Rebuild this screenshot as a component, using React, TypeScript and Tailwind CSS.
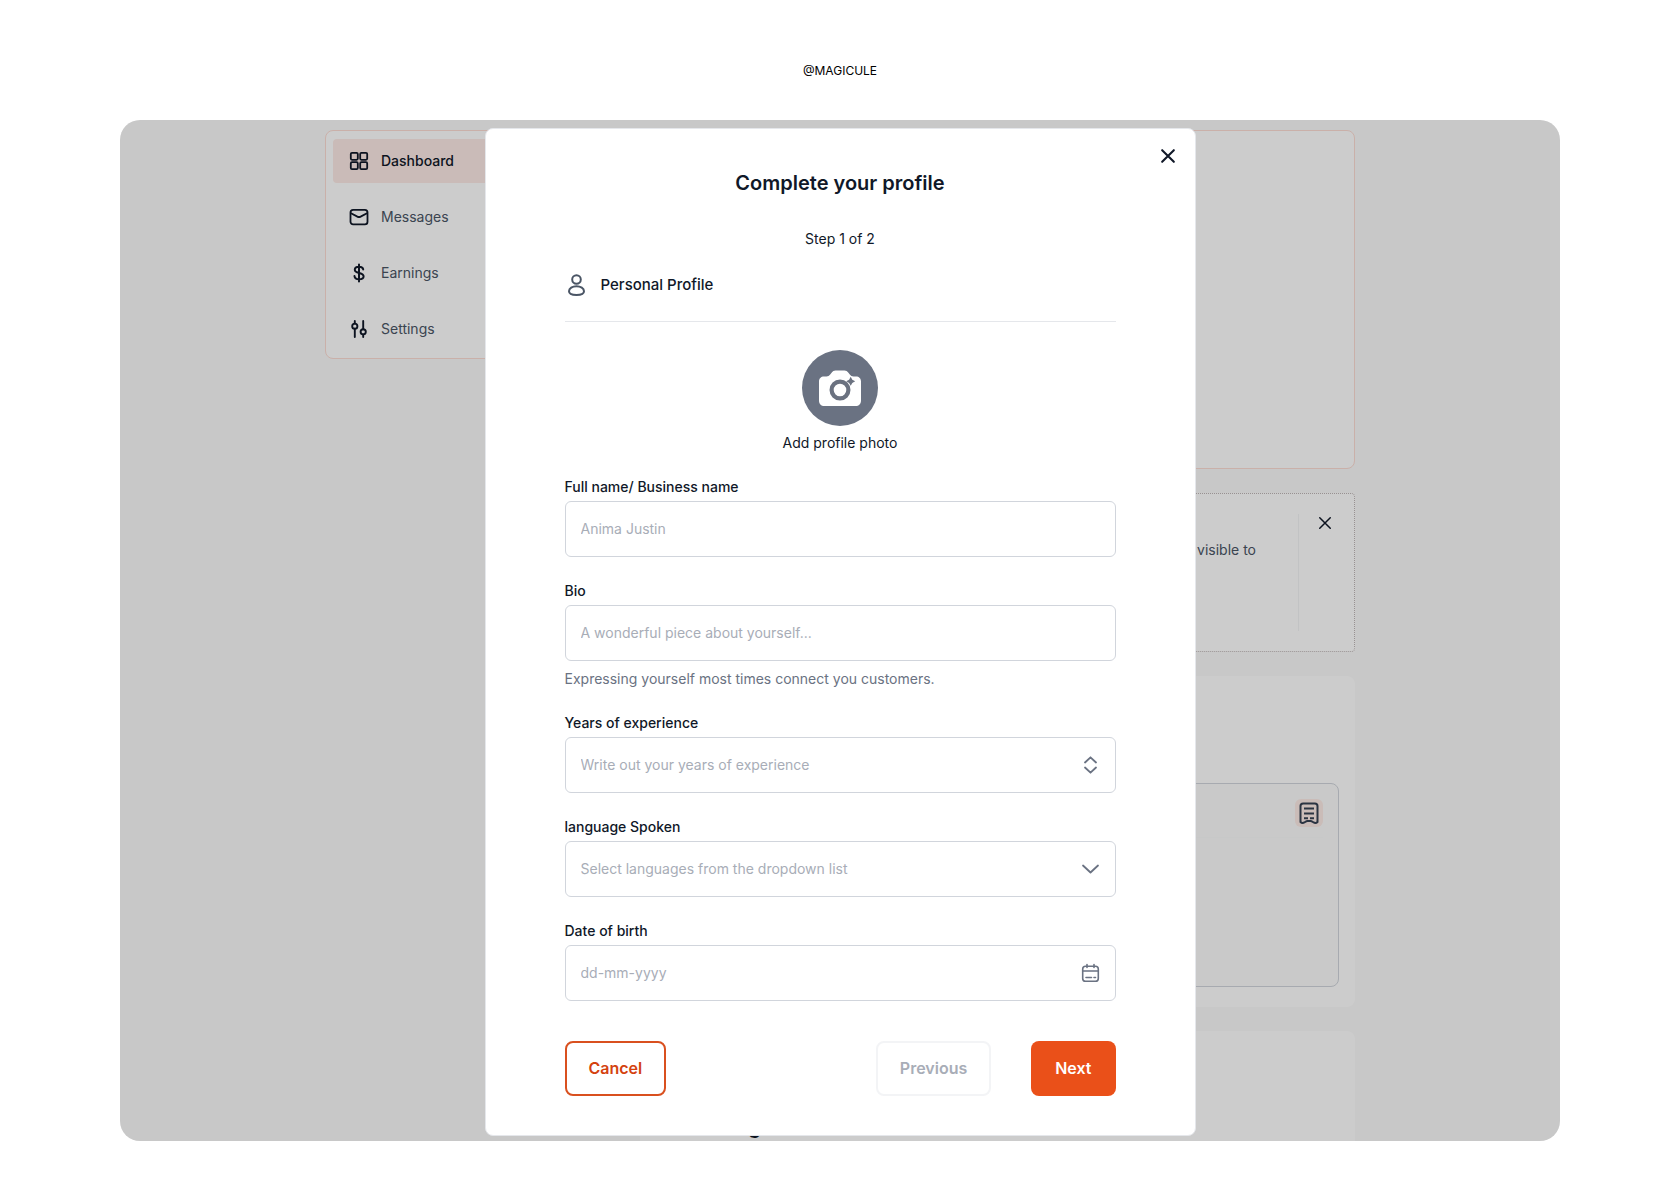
import React from 'react';

type IconProps = { className?: string };

const CloseIcon: React.FC<IconProps> = ({ className }) => (
  <svg viewBox="0 0 24 24" fill="none" stroke="currentColor" className={className} strokeLinecap="round">
    <path d="M5 5l14 14M19 5L5 19" />
  </svg>
);

const GridIcon = () => (
  <svg viewBox="0 0 20 20" fill="none" stroke="currentColor" strokeWidth="1.8" className="size-5">
    <rect x="1.8" y="1.8" width="7" height="7" rx="1.2" />
    <rect x="11.2" y="1.8" width="7" height="7" rx="1.2" />
    <rect x="1.8" y="11.2" width="7" height="7" rx="1.2" />
    <rect x="11.2" y="11.2" width="7" height="7" rx="1.2" />
  </svg>
);

const MailIcon = () => (
  <svg viewBox="0 0 20 20" fill="none" stroke="currentColor" strokeWidth="1.8" strokeLinecap="round" strokeLinejoin="round" className="size-5">
    <rect x="1.5" y="2.9" width="17" height="14.4" rx="2.6" />
    <path d="M2 6.2l6.4 3.4c1 .5 2.2.5 3.2 0L18 6.2" />
  </svg>
);

const DollarIcon = () => (
  <svg viewBox="0 0 20 20" fill="none" stroke="currentColor" strokeWidth="2" strokeLinecap="round" className="size-5">
    <path d="M10 1.5v17M14.2 6.4C14 4.6 12.4 3.7 10 3.7c-2.5 0-4.2 1.1-4.2 3 0 4.4 8.8 2.2 8.8 6.6 0 1.9-1.9 3-4.5 3-2.7 0-4.4-1.2-4.6-3.2" />
  </svg>
);

const SlidersIcon = () => (
  <svg viewBox="0 0 20 20" fill="none" stroke="currentColor" strokeWidth="1.9" strokeLinecap="round" className="size-5">
    <path d="M5.8 2v2.6M5.8 9.8V18M14.2 18v-2.6M14.2 10.2V2" />
    <circle cx="5.8" cy="7.2" r="2.6" />
    <circle cx="14.2" cy="12.8" r="2.6" />
  </svg>
);

const UserIcon = () => (
  <svg viewBox="0 0 24 24" fill="none" stroke="currentColor" strokeWidth="2" strokeLinejoin="round" className="size-6">
    <circle cx="11.5" cy="6.5" r="4.3" />
    <path d="M4 18.2c0-2.9 3.4-5 7.5-5s7.5 2.1 7.5 5-3.4 3.7-7.5 3.7-7.5-.8-7.5-3.7z" />
  </svg>
);

const CameraIcon = () => (
  <svg viewBox="0 0 44 38" className="w-11">
    <path
      fill="#fff"
      d="M6 7.5h2.5c1.6 0 2.7-.6 3.7-1.9l1.6-2.1C14.7 2.2 15.8 1.5 17.5 1.5h9c1.7 0 2.8.7 3.7 2l1.6 2.1c1 1.3 2.1 1.9 3.7 1.9H38c3 0 5 2 5 5v19c0 3.5-2 5.5-5.5 5.5h-31C3 37 1 35 1 31.5v-19c0-3 2-5 5-5z"
    />
    <circle cx="22" cy="21" r="8.4" fill="none" stroke="#6b7280" strokeWidth="4.2" />
    <path fill="#6b7280" d="M32.7 7.8l1.6 2.9 2.9 1.6-2.9 1.6-1.6 2.9-1.6-2.9-2.9-1.6 2.9-1.6z" />
  </svg>
);

const UpDownIcon = () => (
  <svg viewBox="0 0 20 20" fill="none" stroke="currentColor" strokeWidth="1.8" strokeLinecap="round" strokeLinejoin="round" className="size-5">
    <path d="M5 7.5l5.5-5.2L16 7.5M5 12.5l5.5 5.2 5.5-5.2" />
  </svg>
);

const DownIcon = () => (
  <svg viewBox="0 0 20 20" fill="none" stroke="currentColor" strokeWidth="1.8" strokeLinecap="round" strokeLinejoin="round" className="size-5">
    <path d="M3 6.5l7.5 7 7.5-7" />
  </svg>
);

const CalendarIcon = () => (
  <svg viewBox="0 0 20 20" fill="none" stroke="currentColor" strokeWidth="1.6" strokeLinecap="round" className="size-5">
    <rect x="2.7" y="3.2" width="15.6" height="15" rx="2.8" />
    <path d="M2.7 8h15.6M7 1.5v3M14 1.5v3M6 14.5h5.5M14 14.5h1.5" />
  </svg>
);

const ReceiptIcon = () => (
  <svg viewBox="0 0 20 22" fill="none" stroke="currentColor" strokeWidth="2" strokeLinejoin="round" className="w-5">
    <path d="M1.5 20V4c0-1.7 1-2.6 2.6-2.6h11.8c1.6 0 2.6.9 2.6 2.6v16c-1.5 1.5-3 1-4.3.2-1.2-.8-1.7-1.2-2.7-1.2h-3c-1 0-1.5.4-2.7 1.2-1.3.8-2.8 1.3-4.3-.2z" />
    <path d="M5 6.5h10M5 11.5h10M5 16.2h4M11 16.2h4" />
  </svg>
);

const NAV = [
  { label: 'Dashboard', icon: GridIcon, active: true },
  { label: 'Messages', icon: MailIcon },
  { label: 'Earnings', icon: DollarIcon },
  { label: 'Settings', icon: SlidersIcon },
];

const LABEL = 'text-sm font-medium text-gray-900';
const CONTROL =
  'h-14 w-full appearance-none rounded-md border border-gray-300 bg-white px-[15px] text-sm text-gray-900 placeholder:text-[#a8adb7] outline-none focus:border-gray-500';

interface FieldProps {
  id: string;
  label: string;
  hint?: string;
  icon?: React.ReactNode;
  children: React.ReactNode;
}

const Field: React.FC<FieldProps> = ({ id, label, hint, icon, children }) => (
  <div className="flex flex-col">
    <label htmlFor={id} className={LABEL}>{label}</label>
    <div className="relative mt-1">
      {children}
      {icon && (
        <span className="pointer-events-none absolute inset-y-0 right-4 flex items-center text-gray-500">{icon}</span>
      )}
    </div>
    {hint && <p className="mt-2 text-sm text-gray-500">{hint}</p>}
  </div>
);

const TextInput: React.FC<React.InputHTMLAttributes<HTMLInputElement>> = props => (
  <input type="text" className={`${CONTROL} pb-0.5`} {...props} />
);

const Sidebar = () => (
  <nav className="flex w-[291px] shrink-0 flex-col gap-3 rounded-lg border border-[#fddcd4] bg-white px-[7px] pb-[7px] pt-2">
    {NAV.map(({ label, icon: Icon, active }) => (
      <a
        key={label}
        href="#"
        className={`flex h-11 items-center gap-3 rounded px-4 text-sm ${
          active ? 'bg-[#fdeae6] font-medium text-gray-900' : 'text-gray-600'
        }`}
      >
        <span className="text-gray-900"><Icon /></span>
        {label}
      </a>
    ))}
  </nav>
);

const Dashboard = () => (
  <div className="mx-auto flex h-full max-w-[1030px] items-start gap-6 pt-[10px]">
    <Sidebar />
    <div className="flex min-w-0 flex-1 flex-col gap-6">
      <section className="h-[339px] rounded-lg border border-[#fddcd4] bg-white" />

      <section className="flex h-[159px] rounded border border-dotted border-[#bfb6b6] bg-white py-5">
        <div className="flex-1 pr-[42px] pt-[26px] text-right text-sm text-gray-600">visible to</div>
        <div className="w-14 border-l border-gray-100 pl-[17px]">
          <button aria-label="Dismiss" className="block text-gray-900">
            <CloseIcon className="size-[18px] stroke-2" />
          </button>
        </div>
      </section>

      <section className="flex h-[331px] flex-col justify-end rounded-lg bg-white px-4 pb-5">
        <div className="h-[204px] rounded-lg border border-gray-300 bg-[#fcfcfc] p-[15px]">
          <div className="flex justify-end border-b border-gray-50 pb-[10px]">
            <span className="flex size-7 items-center justify-center rounded-md bg-[#fdece7] text-gray-700">
              <ReceiptIcon />
            </span>
          </div>
        </div>
      </section>

      <section className="h-60 rounded-lg bg-white px-6 pt-[82px]">
        <h2 className="text-xl font-semibold text-gray-900">Our ratings</h2>
      </section>
    </div>
  </div>
);

const ProfileDialog = () => (
  <div
    role="dialog"
    aria-labelledby="dialog-title"
    className="relative w-full max-w-[711px] rounded-lg border border-gray-200 bg-white px-[79px] pb-[39px] pt-10"
  >
    <button aria-label="Close" className="absolute right-[17px] top-[17px] text-gray-900">
      <CloseIcon className="size-5 stroke-[2.5]" />
    </button>

    <h1 id="dialog-title" className="text-center text-xl font-semibold text-gray-900">Complete your profile</h1>
    <p className="mt-8 text-center text-sm text-gray-900">Step 1 of 2</p>

    <div className="mt-6 flex items-center gap-3 border-b border-gray-200 pb-6">
      <span className="text-gray-600"><UserIcon /></span>
      <h2 className="text-[15px] leading-6 font-medium text-gray-900">Personal Profile</h2>
    </div>

    <button className="mx-auto mt-7 flex flex-col items-center gap-[7px]">
      <span className="flex size-[76px] items-center justify-center rounded-full bg-gray-500">
        <CameraIcon />
      </span>
      <span className="text-sm text-gray-900">Add profile photo</span>
    </button>

    <form className="mt-6" onSubmit={e => e.preventDefault()}>
      <div className="flex flex-col gap-6">
        <Field id="name" label="Full name/ Business name">
          <TextInput id="name" placeholder="Anima Justin" />
        </Field>
        <Field id="bio" label="Bio" hint="Expressing yourself most times connect you customers.">
          <TextInput id="bio" placeholder="A wonderful piece about yourself..." />
        </Field>
        <Field id="years" label="Years of experience" icon={<UpDownIcon />}>
          <TextInput id="years" inputMode="numeric" placeholder="Write out your years of experience" />
        </Field>
        <Field id="language" label="language Spoken" icon={<DownIcon />}>
          <select id="language" defaultValue="" className={`${CONTROL} invalid:text-[#a8adb7]`} required>
            <option value="" disabled>Select languages from the dropdown list</option>
          </select>
        </Field>
        <Field id="dob" label="Date of birth" icon={<CalendarIcon />}>
          <TextInput id="dob" placeholder="dd-mm-yyyy" />
        </Field>
      </div>

      <div className="mt-10 flex h-[55px] items-stretch gap-10 text-base font-semibold">
        <button type="button" className="mr-auto rounded-lg border-2 border-[#d9501f] px-[22px] pb-0.5 text-[#d4420f]">Cancel</button>
        <button type="button" disabled className="rounded-lg border-2 border-gray-100 px-[22px] pb-0.5 text-[#a8adb7]">Previous</button>
        <button type="submit" className="rounded-lg bg-[#ea5019] px-6 pb-0.5 text-white">Next</button>
      </div>
    </form>
  </div>
);

export default function App() {
  return (
    <div className="min-h-screen bg-white px-[120px] pb-[62px] font-['Inter',sans-serif]">
      <header className="flex h-[120px] items-center justify-center pt-[22px]">
        <p className="text-xs text-black">@MAGICULE</p>
      </header>

      <main className="relative overflow-hidden rounded-[20px] bg-[#fafafa]">
        <div className="absolute inset-0">
          <Dashboard />
        </div>
        <div className="relative flex justify-center bg-black/20 pb-[5px] pt-2">
          <ProfileDialog />
        </div>
      </main>
    </div>
  );
}
